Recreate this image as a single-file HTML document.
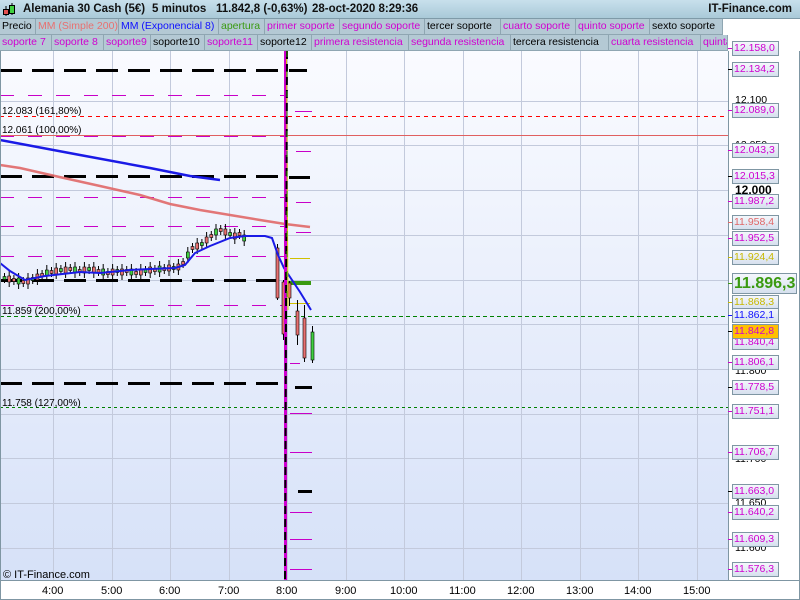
<!DOCTYPE html>
<html><head><meta charset="utf-8">
<style>
*{margin:0;padding:0;box-sizing:border-box}
body{width:800px;height:600px;overflow:hidden;background:#fff;font-family:"Liberation Sans",sans-serif;position:relative}
#hdr{position:absolute;left:0;top:0;width:800px;height:19px;background:linear-gradient(#c8e0ec,#a9c9d8);border-bottom:1px solid #7f9aa8;font-size:11.5px;font-weight:bold;color:#111;white-space:nowrap}
#hdr span{position:absolute;top:3px}
.tabs{position:absolute;left:0;height:16px;font-size:10.5px;white-space:nowrap}
.tabs span{position:absolute;top:0;height:16px;line-height:15px;padding-left:2px;background:#b4c9d4;border-right:1px solid #8fa6b2;border-bottom:1px solid #8fa6b2;overflow:hidden}
.m{color:#d000d0}.k{color:#000}
.lab{position:absolute;left:732px;width:47px;height:15px;border:1px solid #7f96a3;background:linear-gradient(#f4f7fc,#d6e0ee);font-size:10.5px;line-height:13px;padding-left:1px;color:#d000d0;white-space:nowrap;overflow:hidden}
.tk{position:absolute;left:728px;width:4px;height:1px;background:#d000d0}
.pl{position:absolute;left:735px;font-size:10.5px;color:#000}
.tl{position:absolute;top:585px;font-size:11px;color:#000}
</style></head><body>
<div id="hdr">
<svg style="position:absolute;left:2px;top:2px" width="14" height="15"><line x1="4" y1="4" x2="4" y2="14" stroke="#000"/><rect x="1.5" y="7.5" width="5" height="5" fill="#e35050" stroke="#000"/><line x1="10" y1="1" x2="10" y2="13" stroke="#000"/><rect x="7.5" y="3.5" width="5" height="8" fill="#40d040" stroke="#000"/></svg>
<span style="left:23px">Alemania 30 Cash (5€)</span>
<span style="left:152px">5 minutos</span>
<span style="left:216px">11.842,8 (-0,63%)</span>
<span style="left:312px">28-oct-2020 8:29:36</span>
<span style="right:8px">IT-Finance.com</span>
</div>
<div class="tabs" style="top:19px;width:727px">
<span class="k" style="left:0;width:36px">Precio</span>
<span style="left:36px;width:83px;color:#e87070">MM (Simple 200)</span>
<span style="left:119px;width:100px;color:#1010ff">MM (Exponencial 8)</span>
<span style="left:219px;width:46px;color:#3a9a10">apertura</span>
<span class="m" style="left:265px;width:75px">primer soporte</span>
<span class="m" style="left:340px;width:85px">segundo soporte</span>
<span class="k" style="left:425px;width:76px">tercer soporte</span>
<span class="m" style="left:501px;width:75px">cuarto soporte</span>
<span class="m" style="left:576px;width:74px">quinto soporte</span>
<span class="k" style="left:650px;width:73px">sexto soporte</span>
</div>
<div class="tabs" style="top:35px;width:727px">
<span class="m" style="left:0;width:52px">soporte 7</span>
<span class="m" style="left:52px;width:52px">soporte 8</span>
<span class="m" style="left:104px;width:47px">soporte9</span>
<span class="k" style="left:151px;width:54px">soporte10</span>
<span class="m" style="left:205px;width:53px">soporte11</span>
<span class="k" style="left:258px;width:54px">soporte12</span>
<span class="m" style="left:312px;width:97px">primera resistencia</span>
<span class="m" style="left:409px;width:102px">segunda resistencia</span>
<span class="k" style="left:511px;width:98px">tercera resistencia</span>
<span class="m" style="left:609px;width:92px">cuarta resistencia</span>
<span class="m" style="left:701px;width:27px">quinta</span>
</div>
<svg style="position:absolute;left:0;top:51px" width="800" height="549">
<defs><linearGradient id="bg" x1="0" y1="0" x2="0" y2="1"><stop offset="0" stop-color="#fafbff"/><stop offset="1" stop-color="#d6e1f8"/></linearGradient></defs>
<g transform="translate(0,-51)">
<rect x="0" y="51" width="728" height="529" fill="url(#bg)"/>
<g stroke="#c3cadc" stroke-width="1">
<line x1="53.5" y1="51" x2="53.5" y2="580"/><line x1="112.5" y1="51" x2="112.5" y2="580"/><line x1="170.5" y1="51" x2="170.5" y2="580"/><line x1="229.5" y1="51" x2="229.5" y2="580"/><line x1="287.5" y1="51" x2="287.5" y2="580"/><line x1="346.5" y1="51" x2="346.5" y2="580"/><line x1="404.5" y1="51" x2="404.5" y2="580"/><line x1="463.5" y1="51" x2="463.5" y2="580"/><line x1="521.5" y1="51" x2="521.5" y2="580"/><line x1="580.5" y1="51" x2="580.5" y2="580"/><line x1="638.5" y1="51" x2="638.5" y2="580"/><line x1="697.5" y1="51" x2="697.5" y2="580"/>
<line x1="0" y1="101.5" x2="728" y2="101.5"/><line x1="0" y1="145.5" x2="728" y2="145.5"/><line x1="0" y1="190.5" x2="728" y2="190.5"/><line x1="0" y1="235.5" x2="728" y2="235.5"/><line x1="0" y1="280.5" x2="728" y2="280.5"/><line x1="0" y1="324.5" x2="728" y2="324.5"/><line x1="0" y1="369.5" x2="728" y2="369.5"/><line x1="0" y1="414.5" x2="728" y2="414.5"/><line x1="0" y1="458.5" x2="728" y2="458.5"/><line x1="0" y1="503.5" x2="728" y2="503.5"/><line x1="0" y1="548.5" x2="728" y2="548.5"/>
</g>
<g stroke="#000" stroke-width="3" stroke-dasharray="22,10">
<line x1="0" y1="70.5" x2="285" y2="70.5"/><line x1="0" y1="176.5" x2="285" y2="176.5"/><line x1="0" y1="280.5" x2="285" y2="280.5"/><line x1="0" y1="383.5" x2="285" y2="383.5"/>
</g>
<g stroke="#000" stroke-width="3"><line x1="289" y1="70.5" x2="307" y2="70.5"/><line x1="289" y1="177.5" x2="310" y2="177.5"/><line x1="295" y1="387.5" x2="312" y2="387.5"/><line x1="298" y1="491.5" x2="312" y2="491.5"/></g>
<g stroke="#c800c8" stroke-width="1" stroke-dasharray="14,14">
<line x1="0" y1="95.5" x2="285" y2="95.5"/><line x1="0" y1="136.5" x2="285" y2="136.5"/><line x1="0" y1="197.5" x2="285" y2="197.5"/><line x1="0" y1="226.5" x2="285" y2="226.5"/><line x1="0" y1="256.5" x2="285" y2="256.5"/><line x1="0" y1="305.5" x2="285" y2="305.5"/>
</g>
<g stroke="#c800c8" stroke-width="1"><line x1="292" y1="49.5" x2="310" y2="49.5"/><line x1="295" y1="111.5" x2="312" y2="111.5"/><line x1="296" y1="151.5" x2="311" y2="151.5"/><line x1="296" y1="202.5" x2="311" y2="202.5"/><line x1="296" y1="232.5" x2="311" y2="232.5"/><line x1="290" y1="363.5" x2="300" y2="363.5"/><line x1="290" y1="413.5" x2="312" y2="413.5"/><line x1="290" y1="452.5" x2="312" y2="452.5"/><line x1="290" y1="512.5" x2="312" y2="512.5"/><line x1="290" y1="539.5" x2="312" y2="539.5"/><line x1="290" y1="569.5" x2="312" y2="569.5"/></g>
<g stroke="#d0c000" stroke-width="1"><line x1="290" y1="258.5" x2="310" y2="258.5"/><line x1="290" y1="303.5" x2="310" y2="303.5"/></g>
<line x1="0" y1="116.5" x2="728" y2="116.5" stroke="#ff0000" stroke-dasharray="4,4"/>
<line x1="0" y1="135.5" x2="728" y2="135.5" stroke="#e06060"/>
<line x1="0" y1="316.5" x2="728" y2="316.5" stroke="#008000" stroke-dasharray="4,3"/>
<line x1="0" y1="407.5" x2="728" y2="407.5" stroke="#008000" stroke-dasharray="3,3"/>
<rect x="288" y="281" width="23" height="4" fill="#3a9a10"/>
<polyline points="0,165 20,168 55,176 100,186 140,195 170,204 200,210 230,215 260,220 285,224 310,227" fill="none" stroke="#e06868" stroke-width="2.5" opacity="0.9"/>
<polyline points="0,140 80,155 150,168 190,176 220,180" fill="none" stroke="#1a1ae6" stroke-width="2.5"/>
<g id="cd"></g>
<polyline points="0,263 10,271 25,280 45,276 80,272 100,273 130,270 150,269 175,268 185,265 195,253 210,246 230,238 245,236 265,236 272,238 278,255 284,268 292,280 300,292 308,305 311,310" fill="none" stroke="#1a1ae6" stroke-width="2"/>
<line x1="285.5" y1="51" x2="285.5" y2="580" stroke="#d000d0" stroke-width="3"/>
<line x1="286.5" y1="51" x2="288" y2="310" stroke="#d8c800" stroke-width="1"/>
<line x1="287" y1="51" x2="285" y2="580" stroke="#000" stroke-width="2" stroke-dasharray="8,5"/>
<line x1="287" y1="51" x2="287" y2="300" stroke="#3a9a10" stroke-width="1" stroke-dasharray="6,14"/>
<line x1="728.5" y1="51" x2="728.5" y2="581" stroke="#7f96a3"/>
<line x1="0" y1="580.5" x2="800" y2="580.5" stroke="#7f96a3"/>
<line x1="0.5" y1="51" x2="0.5" y2="600" stroke="#7f96a3"/>
<line x1="799.5" y1="19" x2="799.5" y2="600" stroke="#7f96a3"/>
<line x1="0" y1="599.5" x2="800" y2="599.5" stroke="#7f96a3"/>
<g font-family="Liberation Sans" font-size="10" fill="#000">
<text x="2" y="114">12.083 (161,80%)</text><text x="2" y="133">12.061 (100,00%)</text><text x="2" y="314">11.859 (200,00%)</text><text x="2" y="406">11.758 (127,00%)</text>
<text x="3" y="578" font-size="11">© IT-Finance.com</text>
</g>
</g>
</svg>
<div class="pl" style="top:94px">12.100</div>
<div class="pl" style="top:139px">12.050</div>
<div class="pl" style="top:183px;font-weight:bold;font-size:12px">12.000</div>
<div class="pl" style="top:365px">11.800</div>
<div class="pl" style="top:453px">11.700</div>
<div class="pl" style="top:497px">11.650</div>
<div class="pl" style="top:542px">11.600</div>
<div class="tk" style="top:48px"></div><div class="lab" style="top:41px">12.158,0</div>
<div class="tk" style="top:69px;background:#000"></div><div class="lab k" style="top:62px">12.134,2</div>
<div class="tk" style="top:110px"></div><div class="lab" style="top:103px">12.089,0</div>
<div class="tk" style="top:150px"></div><div class="lab" style="top:143px">12.043,3</div>
<div class="tk" style="top:176px;background:#000"></div><div class="lab k" style="top:169px">12.015,3</div>
<div class="tk" style="top:201px"></div><div class="lab" style="top:194px">11.987,2</div>
<div class="tk" style="top:222px;background:#e06868"></div><div class="lab" style="top:215px;color:#e06868">11.958,4</div>
<div class="tk" style="top:238px"></div><div class="lab" style="top:231px">11.952,5</div>
<div class="tk" style="top:257px;background:#c8b800"></div><div class="lab" style="top:250px;color:#c8b800">11.924,4</div>
<div class="tk" style="top:283px;background:#3a9a10"></div><div class="lab" style="top:273px;width:65px;height:21px;font-size:16px;line-height:19px;font-weight:bold;color:#3a9a10">11.896,3</div>
<div class="lab" style="top:335px">11.840,4</div>
<div class="tk" style="top:302px;background:#c8b800"></div><div class="lab" style="top:295px;color:#c8b800">11.868,3</div>
<div class="tk" style="top:315px;background:#1010ff"></div><div class="lab" style="top:308px;color:#1010ff">11.862,1</div>
<div class="tk" style="top:331px;background:#000"></div><div class="lab k" style="top:324px;background:#ffc000">11.842,8</div>
<div class="tk" style="top:362px"></div><div class="lab" style="top:355px">11.806,1</div>
<div class="tk" style="top:387px;background:#000"></div><div class="lab k" style="top:380px">11.778,5</div>
<div class="tk" style="top:411px"></div><div class="lab" style="top:404px">11.751,1</div>
<div class="tk" style="top:452px"></div><div class="lab" style="top:445px">11.706,7</div>
<div class="tk" style="top:491px;background:#000"></div><div class="lab k" style="top:484px">11.663,0</div>
<div class="tk" style="top:512px"></div><div class="lab" style="top:505px">11.640,2</div>
<div class="tk" style="top:539px"></div><div class="lab" style="top:532px">11.609,3</div>
<div class="tk" style="top:569px"></div><div class="lab" style="top:562px">11.576,3</div>
<div class="tl" style="left:42px">4:00</div><div class="tl" style="left:101px">5:00</div><div class="tl" style="left:159px">6:00</div><div class="tl" style="left:218px">7:00</div><div class="tl" style="left:276px">8:00</div><div class="tl" style="left:335px">9:00</div><div class="tl" style="left:390px">10:00</div><div class="tl" style="left:449px">11:00</div><div class="tl" style="left:507px">12:00</div><div class="tl" style="left:566px">13:00</div><div class="tl" style="left:624px">14:00</div><div class="tl" style="left:683px">15:00</div>
<script>
(function(){
var g=document.getElementById('cd'),s='';
function c(x,o,cl,h,l){var up=cl<o,t=Math.min(o,cl),b=Math.max(o,cl);
s+='<line x1="'+(x+1.5)+'" y1="'+h+'" x2="'+(x+1.5)+'" y2="'+l+'" stroke="#000"/>';
s+='<rect x="'+x+'" y="'+t+'" width="3" height="'+Math.max(1,b-t)+'" fill="'+(up?'#40d040':'#e87070')+'" stroke="#000" stroke-width="0.6"/>';}
var base=[278,279,280,281,282,281,279,277,275,273,272,271,270,270,269,270,271,270,269,270,271,272,273,272,271,272,271,272,273,272,271,270,270,269,269,268,268,267,263,255,248,246,244,240,236,232,230,232,234,236,234,238];
var x=3;for(var i=0;i<base.length;i++){var m=base[i],d=(i%3==0?3:-3)*(1+(i%2));c(x,m+d/2,m-d/2,m-Math.abs(d)-2,m+Math.abs(d)+2);x+=4.7;}
c(276,248,298,244,300);c(282,282,334,280,340);c(288,283,298,281,306);c(296,311,335,300,345);c(303,318,358,305,362);c(311,360,332,326,363);
g.innerHTML=s;})();
</script>
</body></html>
